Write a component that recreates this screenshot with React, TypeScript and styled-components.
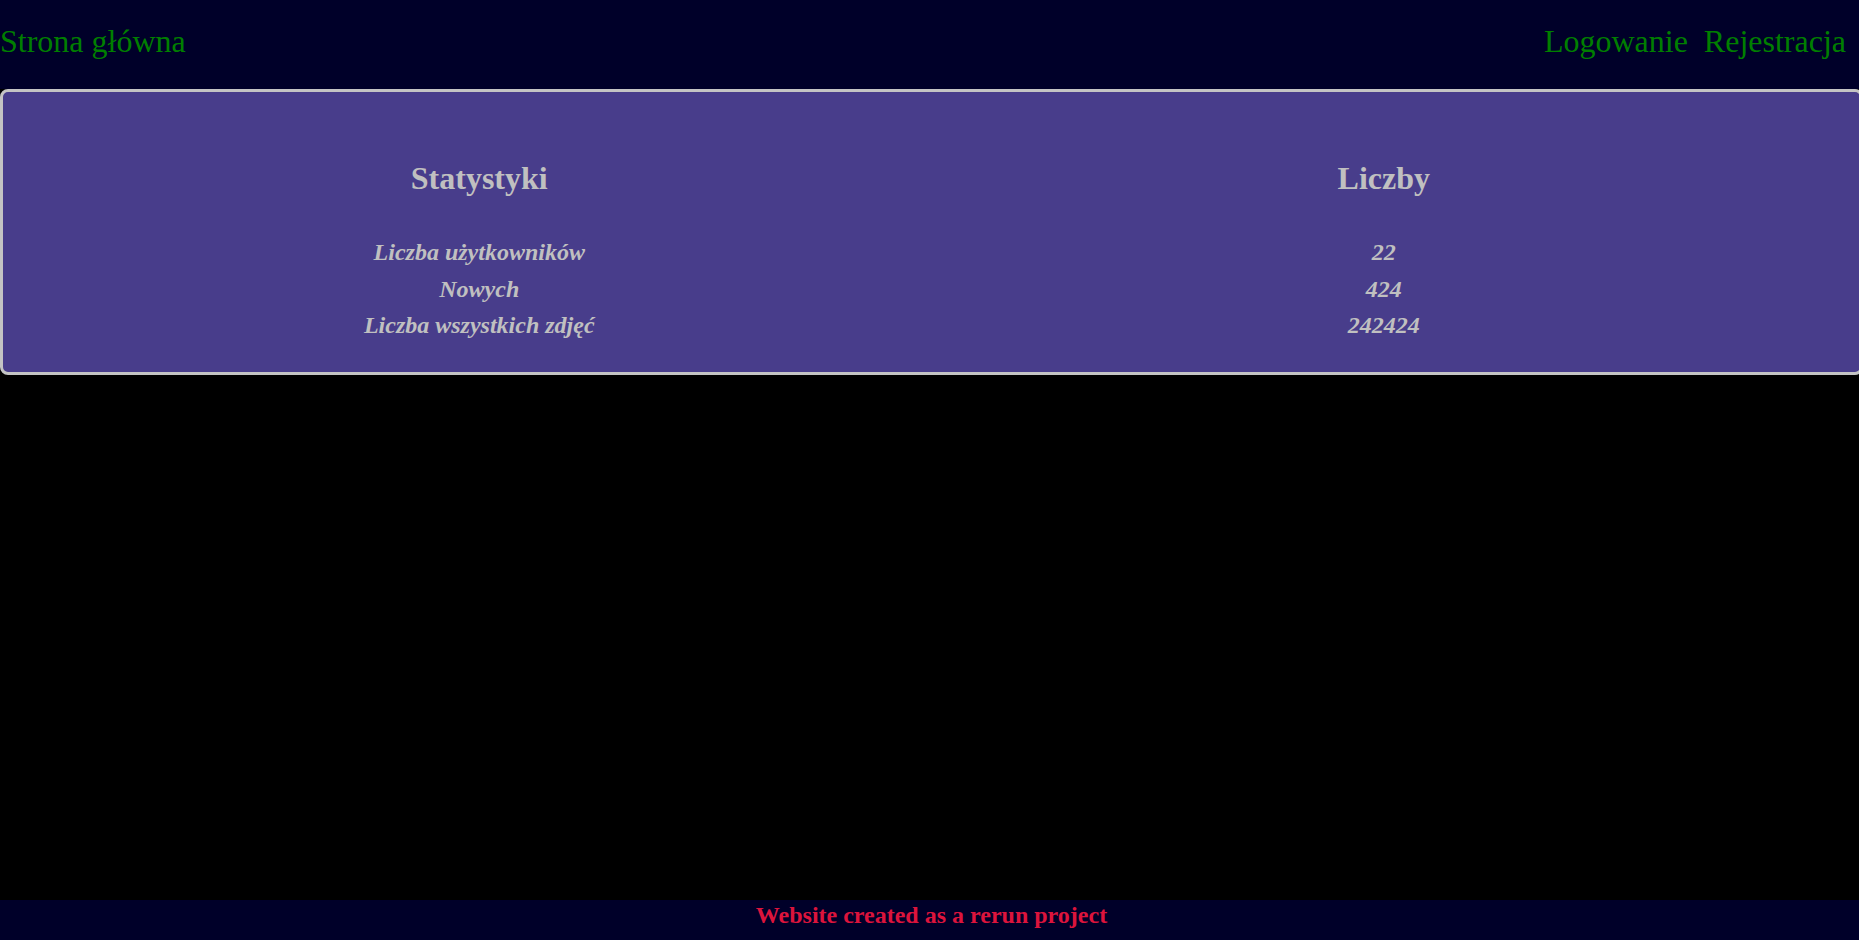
import React from "react";
import styled, { createGlobalStyle } from "styled-components";

const GlobalStyle = createGlobalStyle`
  html, body {
    margin: 0;
    padding: 0;
    background: #000000;
    overflow-x: hidden;
  }
  body {
    font-family: "Liberation Serif", "Times New Roman", serif;
  }
`;

const Page = styled.div`
  min-height: 100vh;
  display: flex;
  flex-direction: column;
  background: #000000;
`;

const Header = styled.header`
  height: 89px;
  box-sizing: border-box;
  padding: 23px 13px 0 0;
  background: #000029;
  display: flex;
  justify-content: space-between;
  align-items: flex-start;
`;

const NavGroup = styled.nav`
  display: flex;
  gap: 16px;
`;

const NavLink = styled.a`
  font-family: "Liberation Serif", "Times New Roman", serif;
  font-size: 32px;
  line-height: 36px;
  color: #007f00;
  text-decoration: none;
  cursor: pointer;
`;

const Main = styled.main`
  flex: 1;
`;

const Card = styled.section`
  width: calc(100% + 4px);
  box-sizing: border-box;
  background: #483d8b;
  border: 3px solid #c4c4c4;
  border-radius: 8px;
  padding: 66px 24px 28px 24px;
`;

const StatsGrid = styled.div`
  display: grid;
  grid-template-columns: 1fr 1fr;
  color: #c0c0c0;
  text-align: center;
`;

const HeadCell = styled.div`
  font-size: 32px;
  line-height: 40px;
  font-weight: bold;
  margin-bottom: 36px;
`;

const Cell = styled.div`
  font-size: 24px;
  line-height: 36.7px;
  font-weight: bold;
  font-style: italic;
`;

const Footer = styled.footer`
  height: 40px;
  background: #000029;
  color: #dc143c;
  font-size: 24px;
  line-height: 30px;
  font-weight: bold;
  text-align: center;
  padding-left: 4px;
`;

const rows: [string, string][] = [
  ["Liczba użytkowników", "22"],
  ["Nowych", "424"],
  ["Liczba wszystkich zdjęć", "242424"],
];

export default function App() {
  return (
    <>
      <GlobalStyle />
      <Page>
        <Header>
          <NavLink>Strona główna</NavLink>
          <NavGroup>
            <NavLink>Logowanie</NavLink>
            <NavLink>Rejestracja</NavLink>
          </NavGroup>
        </Header>
        <Main>
          <Card>
            <StatsGrid>
              <HeadCell>Statystyki</HeadCell>
              <HeadCell>Liczby</HeadCell>
              {rows.map(([label, value]) => (
                <React.Fragment key={label}>
                  <Cell>{label}</Cell>
                  <Cell>{value}</Cell>
                </React.Fragment>
              ))}
            </StatsGrid>
          </Card>
        </Main>
        <Footer>Website created as a rerun project</Footer>
      </Page>
    </>
  );
}
